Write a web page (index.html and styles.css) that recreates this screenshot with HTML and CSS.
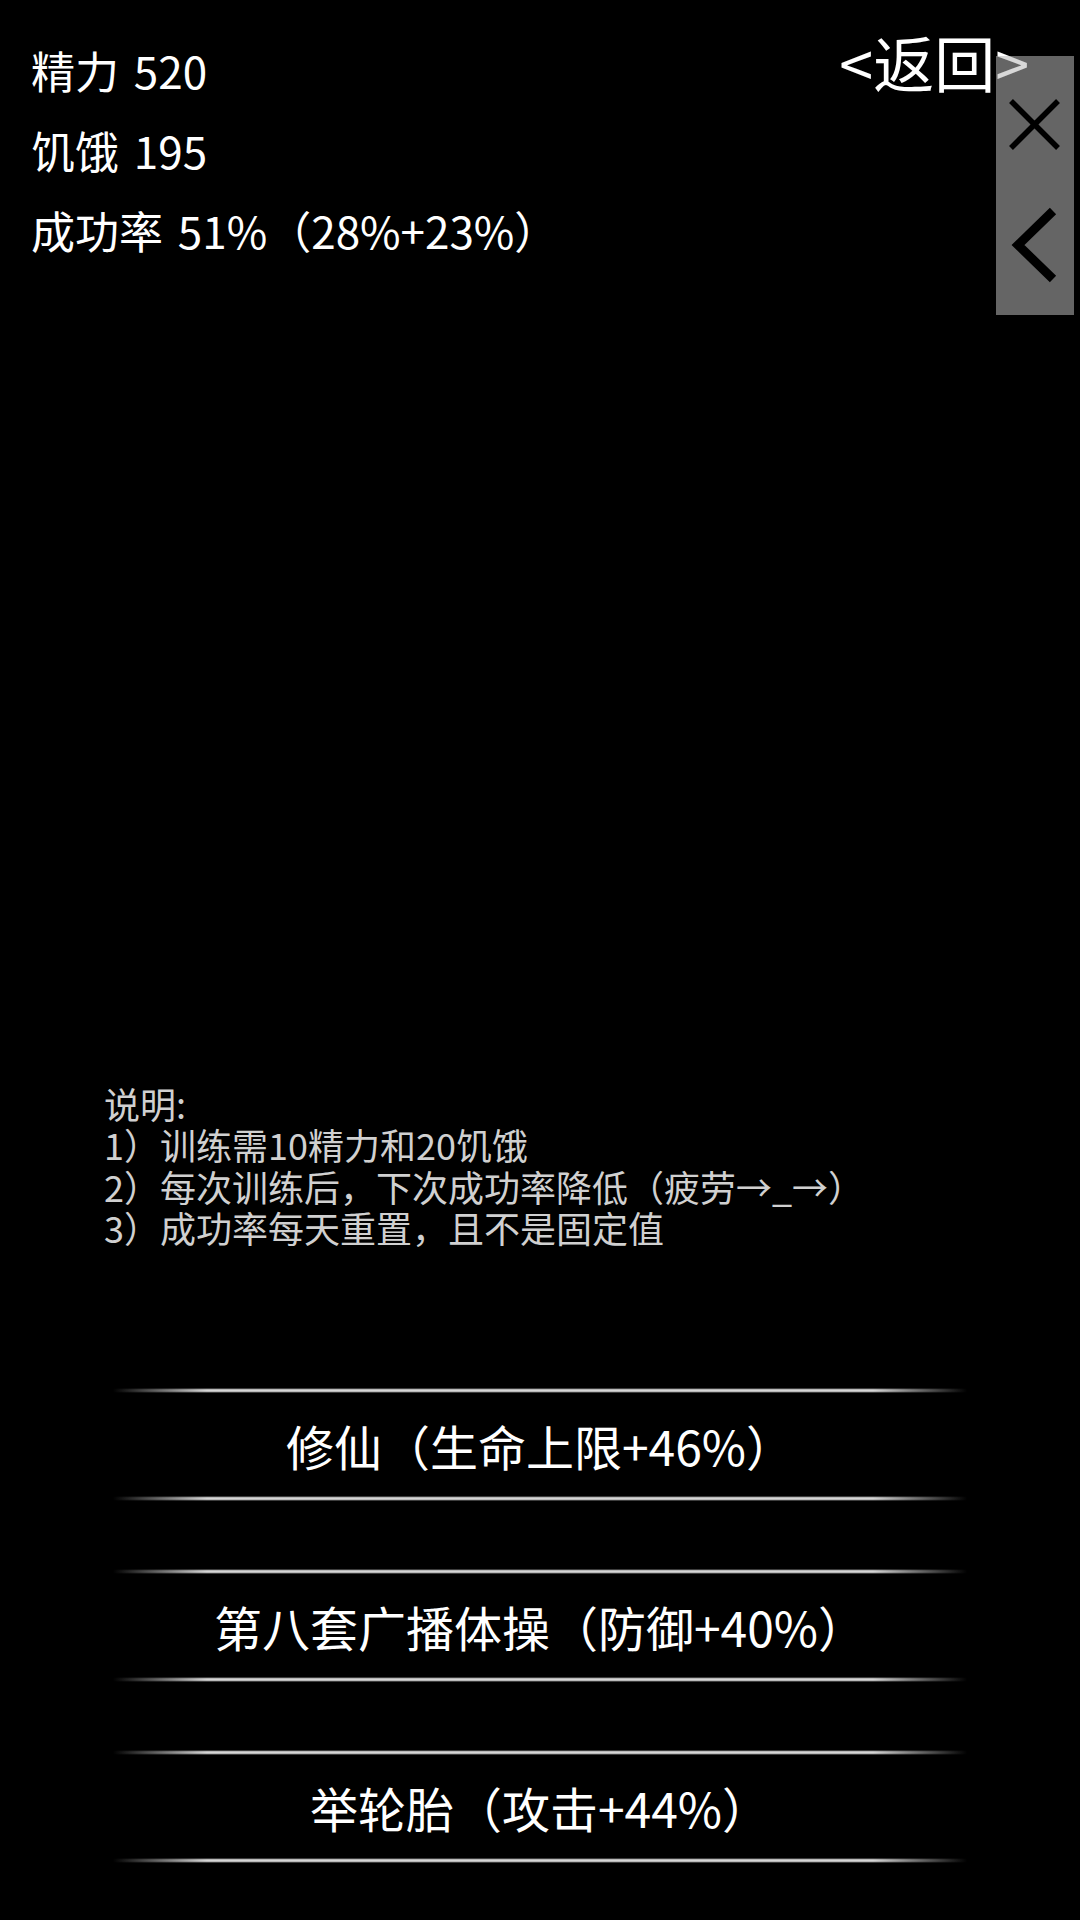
FILE: index.html
```html
<!DOCTYPE html>
<html lang="zh-CN">
<head>
    <meta charset="UTF-8">
    <meta name="viewport" content="width=device-width, initial-scale=1.0">
    <title>训练</title>
    <link rel="stylesheet" href="styles.css">
</head>
<body>
    <div class="page">
        <div class="top">
            <div class="stats">
                <div class="stat">精力 520</div>
                <div class="stat">饥饿 195</div>
                <div class="stat">成功率 51%（28%+23%）</div>
            </div>
            <a class="back" href="#">&lt;返回&gt;</a>
        </div>

        <div class="notes">
            <p>说明:</p>
            <p>1）训练需10精力和20饥饿</p>
            <p>2）每次训练后，下次成功率降低（疲劳→_→）</p>
            <p>3）成功率每天重置，且不是固定值</p>
        </div>

        <div class="actions">
            <button class="train">修仙（生命上限+46%）</button>
            <button class="train">第八套广播体操（防御+40%）</button>
            <button class="train">举轮胎（攻击+44%）</button>
        </div>
    </div>

    <!-- floating toolbar -->
    <div class="sidebar">
        <svg class="tool" width="78" height="259" viewBox="0 0 78 259">
            <path d="M15 45 L62 92 M62 45 L15 92" stroke="#000" stroke-width="5.5" fill="none"/>
            <polyline points="57,155 22,189 57,223" stroke="#000" stroke-width="9" fill="none" stroke-linejoin="miter"/>
        </svg>
    </div>
</body>
</html>
```

FILE: styles.css
```css
body {
    margin: 0;
    background-color: #000;
    color: #fff;
    font-family: "Noto Sans CJK SC", "Noto Sans", sans-serif;
}

.page {
    display: flex;
    flex-direction: column;
    min-height: 100vh;
    box-sizing: border-box;
    padding-bottom: 57px;
}

.top {
    display: flex;
    justify-content: space-between;
    align-items: flex-start;
    padding: 30px 51px 0 31px;
}

.stat {
    font-size: 44px;
    line-height: 80px;
    word-spacing: 5px;
}

.back {
    color: #fff;
    text-decoration: none;
    font-size: 61px;
    line-height: 64px;
}

.notes {
    margin-top: auto;
    padding-left: 104px;
    color: #d0d0d0;
    font-size: 36px;
    line-height: 41.6px;
}

.notes p {
    margin: 0;
}

.actions {
    display: flex;
    flex-direction: column;
    gap: 68px;
    margin: 139px 113px 0 113px;
}

.train {
    position: relative;
    height: 113px;
    padding: 0;
    border: none;
    background: none;
    color: #fff;
    font-family: inherit;
    font-size: 48px;
}

.train::before,
.train::after {
    content: "";
    position: absolute;
    left: 0;
    right: 0;
    height: 5px;
    background: linear-gradient(90deg, transparent, #d6d6d6 11%, #d6d6d6 89%, transparent);
    -webkit-mask-image: linear-gradient(transparent, #000 35%, #000 65%, transparent);
}

.train::before {
    top: 0;
}

.train::after {
    bottom: 0;
}

.sidebar {
    position: absolute;
    top: 56px;
    left: 996px;
    width: 78px;
    height: 259px;
    background-color: rgba(184, 184, 184, 0.55);
}

.tool {
    display: block;
}
```
